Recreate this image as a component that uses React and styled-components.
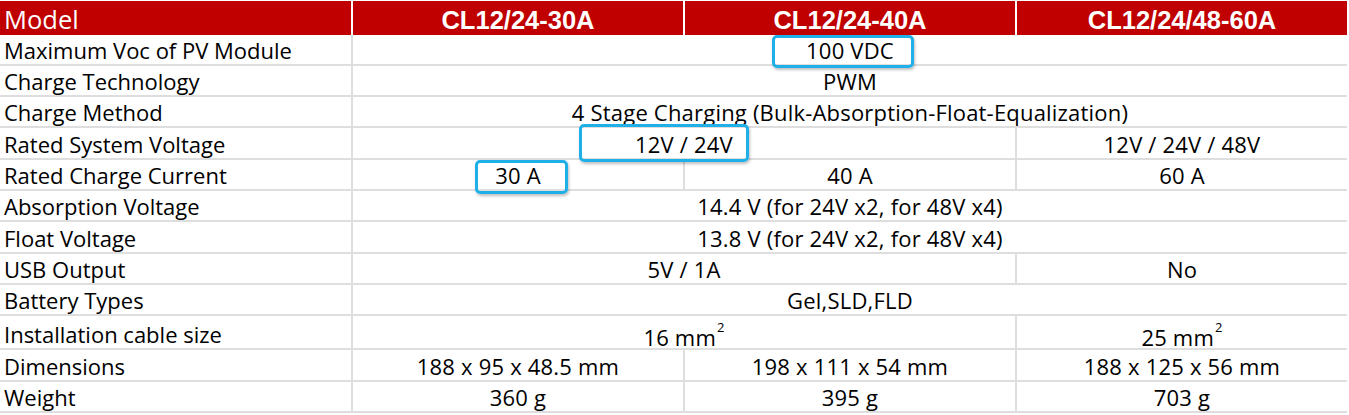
import React from "react";
import styled, { createGlobalStyle } from "styled-components";

const GlobalStyle = createGlobalStyle`
  html, body {
    margin: 0;
    padding: 0;
    background: #ffffff;
  }
  body {
    font-family: "Open Sans", "Noto Sans", sans-serif;
    color: #000;
  }
`;

const headers = ["CL12/24-30A", "CL12/24-40A", "CL12/24/48-60A"];

const rows = [
  { label: "Maximum Voc of PV Module", cells: [{ text: "100 VDC", span: 3 }] },
  { label: "Charge Technology", cells: [{ text: "PWM", span: 3 }] },
  {
    label: "Charge Method",
    cells: [{ text: "4 Stage Charging (Bulk-Absorption-Float-Equalization)", span: 3 }],
  },
  {
    label: "Rated System Voltage",
    cells: [
      { text: "12V / 24V", span: 2 },
      { text: "12V / 24V / 48V", span: 1 },
    ],
  },
  {
    label: "Rated Charge Current",
    cells: [
      { text: "30 A", span: 1 },
      { text: "40 A", span: 1 },
      { text: "60 A", span: 1 },
    ],
  },
  {
    label: "Absorption Voltage",
    cells: [{ text: "14.4 V (for 24V x2, for 48V x4)", span: 3 }],
  },
  {
    label: "Float Voltage",
    cells: [{ text: "13.8 V (for 24V x2, for 48V x4)", span: 3 }],
  },
  {
    label: "USB Output",
    cells: [
      { text: "5V / 1A", span: 2 },
      { text: "No", span: 1 },
    ],
  },
  { label: "Battery Types", cells: [{ text: "Gel,SLD,FLD", span: 3 }] },
  {
    label: "Installation cable size",
    cells: [
      { text: "16 mm", sup: "2", span: 2 },
      { text: "25 mm", sup: "2", span: 1 },
    ],
  },
  {
    label: "Dimensions",
    cells: [
      { text: "188 x 95 x 48.5 mm", span: 1 },
      { text: "198 x 111 x 54 mm", span: 1 },
      { text: "188 x 125 x 56 mm", span: 1 },
    ],
  },
  {
    label: "Weight",
    cells: [
      { text: "360 g", span: 1 },
      { text: "395 g", span: 1 },
      { text: "703 g", span: 1 },
    ],
  },
];

const rowHeights = [29, 29, 29, 30, 29, 29, 30, 29, 29, 32, 30, 29];

const App = () => {
  return (
    <>
      <GlobalStyle />
      <Sheet>
        <HeaderRow>
          <ModelCell>Model</ModelCell>
          {headers.map((h) => (
            <HeadCell key={h}>{h}</HeadCell>
          ))}
        </HeaderRow>
        <Body $rows={rowHeights.map((h) => h + "px").join(" ")}>
          {rows.map((row) => (
            <React.Fragment key={row.label}>
              <LabelCell>{row.label}</LabelCell>
              {row.cells.map((c, i) => (
                <ValueCell key={i} $span={c.span} $low={!!c.sup}>
                  <span>
                    {c.text}
                    {c.sup && <Sup>{c.sup}</Sup>}
                  </span>
                </ValueCell>
              ))}
            </React.Fragment>
          ))}
        </Body>
        <Highlight style={{ left: 772, top: 35, width: 142, height: 33 }} />
        <Highlight style={{ left: 579, top: 124, width: 170, height: 38 }} />
        <Highlight style={{ left: 475, top: 160, width: 93, height: 34 }} />
      </Sheet>
    </>
  );
};

const Sheet = styled.div`
  position: relative;
  width: 1349px;
  padding-top: 1px;
`;

const HeaderRow = styled.div`
  display: grid;
  grid-template-columns: 351px 330px 330px 330px;
  column-gap: 2px;
  height: 34px;
  width: 1347px;
  background: #ffffff;
`;

const HeadCell = styled.div`
  background: #c00000;
  color: #ffffff;
  font-family: "Liberation Sans", Arial, sans-serif;
  font-weight: 700;
  font-size: 25.5px;
  display: flex;
  align-items: center;
  justify-content: center;
  padding-top: 3px;
`;

const ModelCell = styled(HeadCell)`
  font-family: "Open Sans", "Noto Sans", sans-serif;
  font-weight: 500;
  font-size: 25.5px;
  justify-content: flex-start;
  padding-left: 4px;
  padding-top: 1px;
`;

const Body = styled.div`
  display: grid;
  grid-template-columns: 351px 330px 330px 330px;
  grid-template-rows: ${(p) => p.$rows};
  gap: 2px;
  padding: 0 2px 2px 0;
  width: 1345px;
  background: #dedede;
`;

const LabelCell = styled.div`
  background: #ffffff;
  display: flex;
  align-items: flex-end;
  padding: 0 0 1px 4px;
  font-size: 22px;
  line-height: 26px;
  white-space: nowrap;
`;

const ValueCell = styled.div`
  grid-column: span ${(p) => p.$span};
  background: #ffffff;
  display: flex;
  align-items: flex-end;
  justify-content: center;
  padding-bottom: ${(p) => (p.$low ? "0" : "1px")};
  font-size: 22px;
  line-height: ${(p) => (p.$low ? "22px" : "26px")};
  letter-spacing: 0.2px;
  white-space: nowrap;
`;

const Sup = styled.sup`
  font-size: 13px;
  line-height: 0;
  vertical-align: 14px;
  margin-left: 1px;
`;

const Highlight = styled.div`
  position: absolute;
  box-sizing: border-box;
  border: 3px solid #1fb0e8;
  border-radius: 5px;
  box-shadow: 1px 2px 3px rgba(0, 0, 0, 0.25);
  pointer-events: none;
`;

export default App;
